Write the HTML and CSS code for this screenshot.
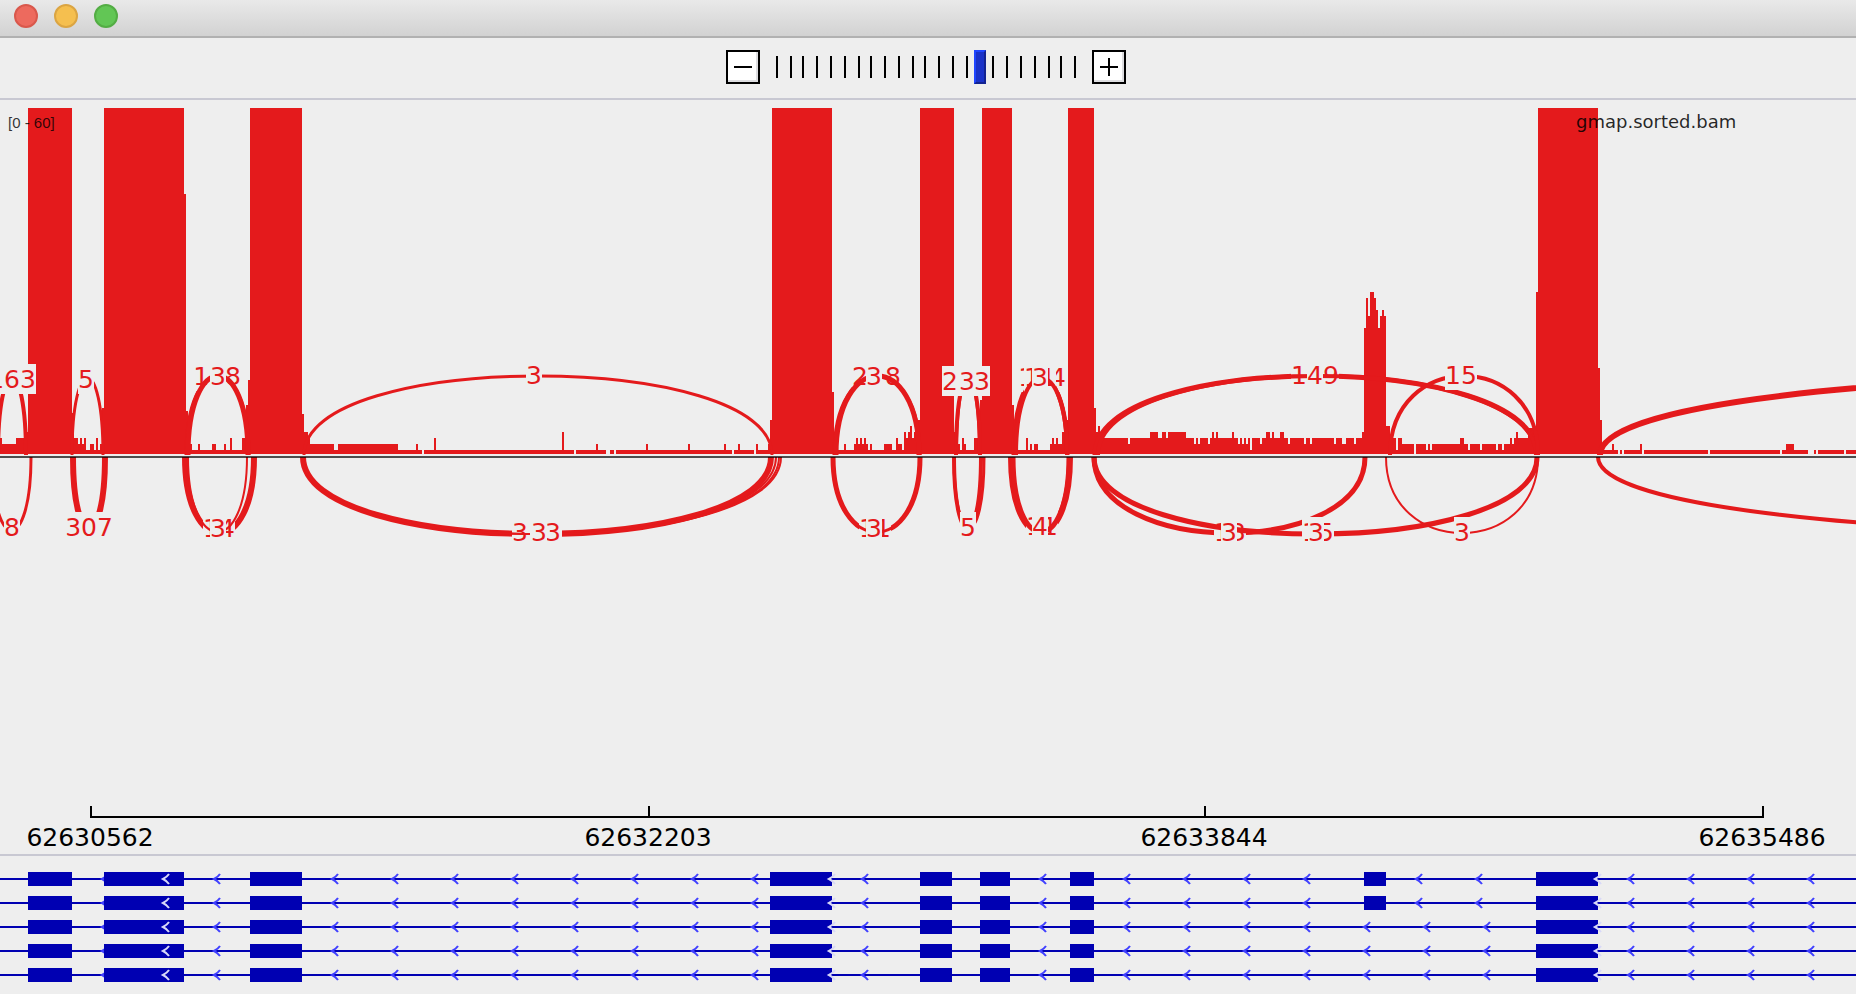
FILE: index.html
```html
<!DOCTYPE html>
<html lang="en">
<head>
<meta charset="utf-8">
<title>Sashimi Plot</title>
<link rel="stylesheet" href="styles.css">
</head>
<body>
<main class="window">
  <header class="titlebar">
    <button class="light light-close" type="button" aria-label="Close"></button>
    <button class="light light-minimize" type="button" aria-label="Minimize"></button>
    <button class="light light-zoom" type="button" aria-label="Zoom"></button>
  </header>
  <nav class="toolbar" aria-label="Zoom controls">
    <button class="zoom-button" type="button" aria-label="Zoom out">
      <svg width="30" height="30" viewBox="0 0 30 30"><path d="M6 15h18"/></svg>
    </button>
    <div class="zoom-scale">
      <svg class="zoom-ticks" id="ticks" width="300" height="22" viewBox="0 0 300 22"></svg>
      <input class="zoom-slider" type="range" min="0" max="22" value="15" aria-label="Zoom level">
    </div>
    <button class="zoom-button" type="button" aria-label="Zoom in">
      <svg width="30" height="30" viewBox="0 0 30 30"><path d="M6 15h18M15 6v18"/></svg>
    </button>
  </nav>
  <section class="track" aria-label="Coverage and junctions">
    <svg class="plot" viewBox="0 100 1856 754">
      <path class="coverage" id="coverage"/>
      <g id="junctions"></g>
      <rect class="baseline" x="0" y="456" width="1856" height="2"/>
      <text class="range" x="8" y="128">[0 - 60]</text>
      <text class="name" x="1576" y="128">gmap.sorted.bam</text>
      <path class="axis" d="M91 806v11h1672v-11M649 806v11M1205 806v11"/>
      <g class="axis-label">
        <text x="90" y="846">62630562</text>
        <text x="648" y="846">62632203</text>
        <text x="1204" y="846">62633844</text>
        <text x="1762" y="846">62635486</text>
      </g>
    </svg>
  </section>
  <section class="genes" aria-label="Gene models">
    <svg class="plot" id="genes" viewBox="0 856 1856 138"></svg>
  </section>
</main>
<script src="plot.js"></script>
</body>
</html>
```
FILE: styles.css
```css
* {
  box-sizing: border-box;
}

body {
  margin: 0;
  background: #eeeeee;
  font-family: "DejaVu Sans", sans-serif;
}

.window {
  min-height: 100vh;
  overflow: hidden;
  background: #eeeeee;
}

.titlebar {
  display: flex;
  gap: 16px;
  height: 38px;
  padding: 4px 14px;
  background: linear-gradient(#e9e9e9, #d2d2d2);
  border-bottom: 2px solid #b1b1b1;
}

.light {
  width: 24px;
  height: 24px;
  padding: 0;
  border: 2px solid;
  border-radius: 50%;
}

.light-close {
  background: #ed6a5e;
  border-color: #d9584c;
}

.light-minimize {
  background: #f5bf4f;
  border-color: #dba543;
}

.light-zoom {
  background: #62c655;
  border-color: #53ad44;
}

.toolbar {
  display: flex;
  justify-content: center;
  align-items: center;
  gap: 12px;
  padding: 12px 4px 14px 0;
  border-bottom: 2px solid #c8c8d2;
}

.zoom-button {
  width: 34px;
  height: 34px;
  padding: 0;
  background: #ffffff;
  border: 2px solid #000000;
  box-shadow: inset -2px -2px #dddde0;
}

.zoom-button svg {
  display: block;
}

.zoom-button path {
  fill: none;
  stroke: #000000;
  stroke-width: 2;
}

.zoom-scale {
  display: grid;
  place-items: center;
}

.zoom-ticks,
.zoom-slider {
  grid-area: 1 / 1;
}

.zoom-ticks {
  fill: #000000;
}

.zoom-slider {
  appearance: none;
  width: 308px;
  height: 34px;
  margin: 0;
  background: transparent;
}

.zoom-slider::-webkit-slider-thumb {
  appearance: none;
  width: 12px;
  height: 34px;
  background: #1a32c8;
  border: solid;
  border-width: 2px;
  border-color: #1f45ff #122391 #122391 #1f45ff;
}

.plot {
  display: block;
  width: 100%;
}

.track {
  border-bottom: 2px solid #c8c8d2;
}

.coverage {
  fill: #e41a1c;
  shape-rendering: crispEdges;
}

.arc {
  fill: none;
  stroke: #e41a1c;
}

.count-box {
  fill: #eeeeee;
}

.count {
  fill: #e41a1c;
  font-size: 25px;
  text-anchor: middle;
}

.baseline {
  fill: #000000;
  fill-opacity: 0.68;
}

.range {
  font-family: "Liberation Sans", sans-serif;
  font-size: 15px;
  fill-opacity: 0.8;
}

.name {
  font-size: 18px;
  fill-opacity: 0.85;
}

.axis {
  fill: none;
  stroke: #000000;
  stroke-width: 2;
}

.axis-label {
  font-size: 25px;
  text-anchor: middle;
}

.exon,
.intron {
  fill: #0000b2;
}

.strand {
  fill: none;
  stroke: #4040ff;
  stroke-width: 2;
}

.strand-light {
  stroke: #d8d8f8;
}
```
FILE: plot.js
```js
const NS = "http://www.w3.org/2000/svg";

function add(parent, tag, attrs, text) {
  const node = document.createElementNS(NS, tag);
  for (const key in attrs) node.setAttribute(key, attrs[key]);
  if (text) node.textContent = text;
  parent.appendChild(node);
}

// Zoom scale marks
const ticks = document.getElementById("ticks");
[0, 14, 26, 40, 54, 68, 82, 94, 108, 122, 136, 148, 162, 176, 190, 202, 216, 230, 244, 258, 272, 284, 298]
  .forEach(x => add(ticks, "rect", { x, y: 0, width: 2, height: 22 }));

// Coverage steps: "x:top", each holding until the next x. 454 is empty.
const steps = `0:438 2:444 16:438 24:432 28:108 72:413 74:438 78:444 80:438 82:444 84:438 86:450 90:444 94:450
96:438 98:450 100:444 102:408 104:108 184:194 186:411 188:438 190:444 192:450 198:444 200:450 212:444 216:450
224:444 226:450 230:438 232:450 242:438 246:405 248:380 250:108 302:414 304:432 308:438 310:444 334:450 338:444
398:450 416:444 418:450 422:454 424:450 434:438 436:450 562:432 564:450 574:454 576:450 596:444 598:450 606:454
610:450 614:454 616:450 646:444 648:450 688:444 690:450 724:444 726:450 732:454 734:450 738:444 740:450 754:454
756:444 758:450 768:444 770:420 772:108 832:392 834:432 836:450 844:444 846:450 854:444 856:438 858:444 860:438
862:444 864:438 866:444 868:450 870:444 872:450 884:444 892:450 896:438 898:444 902:450 904:432 906:438 908:432
910:426 912:438 914:432 916:420 920:108 954:432 956:438 958:444 960:450 962:438 964:444 966:450 974:438 978:420
980:400 982:108 1012:405 1014:450 1016:454 1018:450 1026:438 1028:450 1030:444 1032:450 1034:444 1038:450
1050:444 1052:438 1054:444 1056:438 1058:444 1062:432 1066:420 1068:108 1094:408 1096:432 1098:426 1100:432
1102:438 1128:444 1130:438 1150:432 1158:438 1162:432 1166:438 1168:432 1186:438 1194:444 1196:438 1198:444
1200:438 1208:444 1210:438 1212:432 1214:438 1216:432 1218:438 1232:432 1234:438 1238:444 1240:438 1242:444
1244:438 1246:444 1248:438 1250:450 1252:438 1260:444 1262:438 1266:432 1270:438 1272:432 1274:438 1280:432
1284:438 1288:444 1290:438 1304:444 1306:438 1310:444 1312:438 1334:444 1336:438 1342:444 1346:438 1354:444
1356:438 1362:432 1364:328 1366:298 1368:316 1370:292 1374:298 1376:310 1378:328 1380:316 1382:310 1384:316
1386:426 1390:438 1396:450 1398:438 1402:444 1414:454 1416:444 1426:450 1428:444 1430:450 1432:444 1460:438
1464:444 1468:450 1470:444 1480:450 1482:444 1496:450 1498:444 1502:450 1504:444 1510:438 1512:444 1514:438
1516:432 1518:438 1528:428 1536:292 1538:108 1598:368 1600:420 1602:444 1604:450 1612:444 1614:450 1618:454
1620:450 1622:454 1624:450 1640:444 1642:454 1644:450 1708:454 1710:450 1780:454 1782:450 1786:444 1794:450
1808:454 1814:450 1816:454 1818:450 1844:454 1846:450`;
let outline = "M0 454";
for (const step of steps.split(/\s+/)) {
  const [x, top] = step.split(":");
  outline += `H${x}V${top}`;
}
document.getElementById("coverage").setAttribute("d", outline + "H1856V454z");

// Junctions: [start, end, peak, width, label, label centre, label baseline].
// Peaks above 456 belong to the forward strand.
const junctions = [
  [-2, 26, 378, 4, "163", 12, 388],
  [72, 103, 378, 3, "5", 86, 388],
  [186, 249, 376, 3, "138", 217, 385],
  [188, 248, 376, 5, "3", 218, 385],
  [304, 772, 376, 3, "3", 534, 384],
  [834, 920, 376, 3, "2", 860, 385],
  [0, 0, 376, 0, "8", 893, 385],
  [836, 919, 376, 5, "3", 874, 385],
  [956, 980, 378, 4],
  [957, 979, 380, 2, "   ", 966, 390],
  [0, 0, 376, 0, "2", 950, 390],
  [0, 0, 376, 0, "3", 982, 390],
  [0, 0, 376, 0, "3", 967, 390],
  [1013, 1068, 376, 3, "114", 1042, 386],
  [1015, 1067, 377, 4, "11", 1040, 386],
  [1016, 1067, 378, 4, "3", 1040, 386],
  [1095, 1537, 376, 5, "1", 1299, 384],
  [0, 0, 376, 0, "9", 1331, 384],
  [1098, 1536, 376, 4, "4", 1315, 384],
  [1390, 1538, 376, 4, "15", 1461, 384],
  [1600, 2762, 376, 6],
  [-8, 31, 530, 3, "8", 12, 536],
  [73, 105, 528, 6, "307", 89, 536],
  [185, 254, 533, 6, "14", 219, 537],
  [188, 247, 532, 2, "3", 218, 537],
  [303, 771, 534, 6, "   ", 536, 541],
  [303, 776, 534, 2, "3", 520, 541],
  [303, 779, 534, 2],
  [303, 781, 534, 2, "  ", 546, 541],
  [0, 0, 534, 0, "3", 553, 541],
  [0, 0, 534, 0, "3", 539, 541],
  [833, 920, 532, 5, "11", 875, 537],
  [833, 920, 532, 3, "3", 874, 537],
  [954, 981, 528, 4],
  [954, 984, 528, 3, "5", 968, 536],
  [1011, 1070, 532, 6, "11", 1042, 535],
  [1013, 1069, 532, 5, "4", 1040, 535],
  [1094, 1365, 533, 5, "13", 1230, 541],
  [1094, 1537, 534, 5, "15", 1318, 541],
  [1386, 1538, 533, 2, "3", 1462, 541],
  [0, 0, 457, 0, "3", 1229, 541],
  [0, 0, 457, 0, "3", 1316, 541],
  [1598, 2762, 534, 4]
];
const layer = document.getElementById("junctions");
for (const [start, end, peak, width, label, centre, base] of junctions) {
  const foot = peak < 456 ? 455 : 457;
  const pull = foot + (peak - foot) * 4 / 3;
  if (width) {
    add(layer, "path", {
      class: "arc", "stroke-width": width,
      d: `M${start} ${foot}C${start} ${pull} ${end} ${pull} ${end} ${foot}`
    });
  }
  if (label) {
    const boxWidth = label.length * 16;
    add(layer, "rect", { class: "count-box", x: Math.round(centre - boxWidth / 2), y: base - 24, width: boxWidth, height: 30 });
    if (label.trim()) add(layer, "text", { class: "count", x: centre, y: base }, label);
  }
}

// Gene models
const genes = document.getElementById("genes");
const exons = [[28, 72], [104, 184], [250, 302], [770, 832], [920, 952], [980, 1010], [1070, 1094], [1536, 1598]];
const arrows = [214, 332, 392, 452, 512, 572, 632, 692, 752, 862, 1040, 1124, 1184, 1244, 1304, 1628, 1688, 1748, 1808];
for (let row = 0; row < 5; row++) {
  const y = 872 + row * 24;
  const upper = row < 2;
  const arrow = (x, kind) => add(genes, "path", { class: kind, d: `M${x + 6} ${y + 2}Q${x + 4} ${y + 5} ${x} ${y + 7}Q${x + 4} ${y + 9} ${x + 6} ${y + 12}` });
  add(genes, "rect", { class: "intron", x: 0, y: y + 6, width: 1856, height: 2 });
  for (const x of [102, ...arrows, ...(upper ? [1416, 1476] : [1364, 1424, 1484])]) arrow(x, "strand");
  for (const [a, b] of upper ? [...exons, [1364, 1386]] : exons) {
    add(genes, "rect", { class: "exon", x: a, y, width: b - a, height: 14 });
  }
  for (const x of [163, 829, 1595]) arrow(x, "strand strand-light");
}
```
